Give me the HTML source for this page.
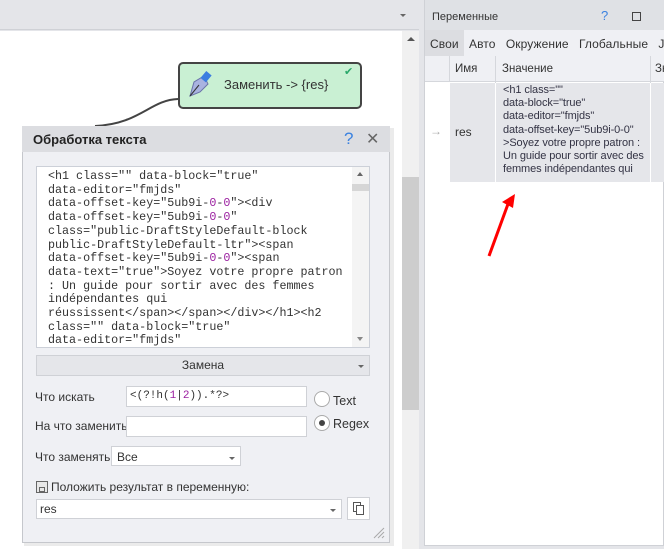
<!DOCTYPE html>
<html><head><meta charset="utf-8"><style>
*{margin:0;padding:0;box-sizing:border-box}
body{width:664px;height:549px;overflow:hidden;background:#e4e5e9;font-family:"Liberation Sans","DejaVu Sans",sans-serif;font-size:12px;color:#222;position:relative}
.a{position:absolute}
.mono{font-family:"Liberation Mono",monospace;font-size:11.7px;line-height:13.7px;white-space:pre;color:#333}
.p{color:#9b1fa0}
</style></head><body>
<div class="a" style="left:0;top:0;width:420px;height:30px;background:#e4e5e9;border-bottom:1px solid #cfd1d6"></div>
<div class="a" style="left:400px;top:14px;width:0;height:0;border-left:3px solid transparent;border-right:3px solid transparent;border-top:3px solid #666"></div>
<div class="a" style="left:0;top:31px;width:402px;height:518px;background:#fff"></div>
<div class="a" style="left:402px;top:31px;width:17px;height:518px;background:#f0f0f0"></div>
<div class="a" style="left:402px;top:177px;width:17px;height:233px;background:#cdcdcd"></div>
<div class="a" style="left:407px;top:37px;width:0;height:0;border-left:4px solid transparent;border-right:4px solid transparent;border-bottom:4px solid #555"></div>
<div class="a" style="left:419px;top:0;width:5px;height:549px;background:#e4e5e9"></div>
<svg class="a" style="left:0;top:0" width="420" height="549"><path d="M95 126 C140 124 150 100 178 99" fill="none" stroke="#444" stroke-width="2"/></svg>
<div class="a" style="left:178px;top:62px;width:184px;height:47px;background:#c9f0d3;border:2px solid #444;border-radius:5px"></div>
<svg class="a" style="left:186px;top:70px" width="28" height="30"><path d="M4 26 L8 12 L18 6 L22 14 L14 22 Z" fill="#a9b3e0" stroke="#6a73a8" stroke-width="1"/><rect x="17" y="2" width="7" height="9" fill="#3b7de0" transform="rotate(40 20 6)"/><line x1="4" y1="26" x2="13" y2="15" stroke="#333"/></svg>
<div class="a" style="left:224px;top:77px;font-size:13px;color:#333">Заменить -&gt; {res}</div>
<div class="a" style="left:344px;top:65px;color:#2aa86a;font-size:11px;font-weight:bold">✔</div>
<div class="a" style="left:24px;top:128px;width:370px;height:418px;background:rgba(0,0,0,0.08)"></div>
<div class="a" style="left:22px;top:126px;width:368px;height:417px;background:#eff0f4;border:1px solid #c5c7cc"></div>
<div class="a" style="left:22px;top:126px;width:368px;height:26px;background:#dcdde1"></div>
<div class="a" style="left:33px;top:132px;font-weight:bold;font-size:13px;color:#222">Обработка текста</div>
<div class="a" style="left:344px;top:129px;font-size:17px;color:#3b82e0">?</div>
<div class="a" style="left:366px;top:129px;font-size:16px;color:#666">✕</div>
<div class="a" style="left:36px;top:166px;width:334px;height:182px;background:#fff;border:1px solid #ccd0d8;overflow:hidden"></div>
<div class="a mono" style="left:48px;top:170px;height:176px;overflow:hidden">&lt;h1 class="" data-block="true"
data-editor="fmjds"
data-offset-key="5ub9i-<span class="p">0</span>-<span class="p">0</span>"&gt;&lt;div
data-offset-key="5ub9i-<span class="p">0</span>-<span class="p">0</span>"
class="public-DraftStyleDefault-block
public-DraftStyleDefault-ltr"&gt;&lt;span
data-offset-key="5ub9i-<span class="p">0</span>-<span class="p">0</span>"&gt;&lt;span
data-text="true"&gt;Soyez votre propre patron
: Un guide pour sortir avec des femmes
indépendantes qui
réussissent&lt;/span&gt;&lt;/span&gt;&lt;/div&gt;&lt;/h1&gt;&lt;h2
class="" data-block="true"
data-editor="fmjds"</div>
<div class="a" style="left:352px;top:167px;width:17px;height:180px;background:#f4f4f4"></div>
<div class="a" style="left:352px;top:184px;width:17px;height:7px;background:#d6d6d6"></div>
<div class="a" style="left:357px;top:172px;border-left:3px solid transparent;border-right:3px solid transparent;border-bottom:4px solid #666"></div>
<div class="a" style="left:357px;top:337px;border-left:3px solid transparent;border-right:3px solid transparent;border-top:4px solid #888"></div>
<div class="a" style="left:36px;top:355px;width:334px;height:21px;background:#e5e6ea;border:1px solid #cfd1d6;text-align:center;line-height:19px;color:#333">Замена</div>
<div class="a" style="left:358px;top:365px;border-left:3px solid transparent;border-right:3px solid transparent;border-top:3px solid #666"></div>
<div class="a" style="left:35px;top:390px;color:#333">Что искать</div>
<div class="a" style="left:126px;top:386px;width:181px;height:21px;background:#fff;border:1px solid #cfd1d6"></div>
<div class="a" style="left:130px;top:390px;font-family:'Liberation Mono',monospace;font-size:11px;color:#333">&lt;(?!h(<span class="p">1</span>|<span class="p">2</span>)).*?&gt;</div>
<div class="a" style="left:314px;top:391px;width:16px;height:16px;border-radius:50%;background:#fff;border:1px solid #aaa"></div>
<div class="a" style="left:333px;top:394px;color:#333;font-size:12.5px">Text</div>
<div class="a" style="left:35px;top:419px;color:#333">На что заменить</div>
<div class="a" style="left:126px;top:416px;width:181px;height:21px;background:#fff;border:1px solid #cfd1d6"></div>
<div class="a" style="left:314px;top:415px;width:16px;height:16px;border-radius:50%;background:#fff;border:1px solid #aaa"></div>
<div class="a" style="left:319px;top:420px;width:6px;height:6px;border-radius:50%;background:#444"></div>
<div class="a" style="left:333px;top:417px;color:#333;font-size:12.5px">Regex</div>
<div class="a" style="left:35px;top:450px;color:#333">Что заменять</div>
<div class="a" style="left:111px;top:446px;width:130px;height:20px;background:#fff;border:1px solid #cfd1d6"></div>
<div class="a" style="left:117px;top:450px;color:#333">Все</div>
<div class="a" style="left:229px;top:457px;border-left:3px solid transparent;border-right:3px solid transparent;border-top:3px solid #666"></div>
<div class="a" style="left:36px;top:481px;width:12px;height:12px;border:1px solid #666;background:#e8e8e8"></div>
<div class="a" style="left:39px;top:487px;width:6px;height:5px;border:1px solid #666"></div>
<div class="a" style="left:51px;top:480px;color:#333">Положить результат в переменную:</div>
<div class="a" style="left:36px;top:499px;width:306px;height:20px;background:#fff;border:1px solid #cfd1d6"></div>
<div class="a" style="left:40px;top:502px;color:#333">res</div>
<div class="a" style="left:330px;top:509px;border-left:3px solid transparent;border-right:3px solid transparent;border-top:3px solid #666"></div>
<div class="a" style="left:347px;top:497px;width:23px;height:23px;background:#fff;border:1px solid #cfd1d6"></div>
<div class="a" style="left:353px;top:502px;width:8px;height:10px;border:1px solid #555;background:#fff"></div>
<div class="a" style="left:356px;top:505px;width:8px;height:10px;border:1px solid #555;background:#fff"></div>
<svg class="a" style="left:370px;top:524px" width="16" height="16"><path d="M14 4 L4 14 M14 8 L8 14 M14 12 L12 14" stroke="#aaa"/></svg>
<div class="a" style="left:424px;top:0;width:240px;height:30px;background:#dfe1e5;border-left:1px solid #cfd1d6"></div>
<div class="a" style="left:432px;top:11px;color:#333;font-size:11px">Переменные</div>
<div class="a" style="left:601px;top:8px;color:#3b82e0;font-size:13px">?</div>
<div class="a" style="left:632px;top:12px;width:9px;height:9px;border:1px solid #444"></div>
<div class="a" style="left:424px;top:30px;width:240px;height:26px;background:#eff0f4;border-left:1px solid #cfd1d6"></div>
<div class="a" style="left:425px;top:30px;width:39px;height:26px;background:#dcdde1"></div>
<div class="a" style="left:430px;top:37px;color:#333;font-size:12px;white-space:nowrap;letter-spacing:0.1px">Свои&nbsp;&nbsp;&nbsp;Авто&nbsp;&nbsp;&nbsp;Окружение&nbsp;&nbsp;&nbsp;Глобальные&nbsp;&nbsp;&nbsp;Js</div>
<div class="a" style="left:424px;top:56px;width:240px;height:490px;background:#fff;border:1px solid #cfd1d6;border-top:none"></div>
<div class="a" style="left:425px;top:56px;width:239px;height:26px;background:#eff0f4;border-bottom:1px solid #d5d7dc"></div>
<div class="a" style="left:449px;top:56px;width:1px;height:26px;background:#d5d7dc"></div>
<div class="a" style="left:495px;top:56px;width:1px;height:126px;background:#d5d7dc"></div>
<div class="a" style="left:650px;top:56px;width:1px;height:126px;background:#d5d7dc"></div>
<div class="a" style="left:455px;top:63px;color:#333;font-size:11.5px">Имя</div>
<div class="a" style="left:502px;top:63px;color:#333;font-size:11.5px">Значение</div>
<div class="a" style="left:655px;top:63px;color:#333;font-size:11.5px">Зн</div>
<div class="a" style="left:450px;top:83px;width:214px;height:99px;background:#e5e6ea"></div>
<div class="a" style="left:495px;top:83px;width:1px;height:99px;background:#fff"></div>
<div class="a" style="left:650px;top:83px;width:1px;height:99px;background:#fff"></div>
<div class="a" style="left:430px;top:124px;color:#aaa;font-size:12px">→</div>
<div class="a" style="left:455px;top:125px;color:#333">res</div>
<div class="a" style="left:503px;top:84px;color:#334;font-size:11px;line-height:13.2px;white-space:pre;letter-spacing:-0.1px">&lt;h1 class=""
data-block="true"
data-editor="fmjds"
data-offset-key="5ub9i-0-0"
&gt;Soyez votre propre patron :
Un guide pour sortir avec des
femmes indépendantes qui</div>
<svg class="a" style="left:480px;top:190px" width="40" height="70"><line x1="9" y1="66" x2="28" y2="14" stroke="#f00" stroke-width="3"/><path d="M22 12 L35 4 L33 18 Z" fill="#f00"/></svg>
</body></html>
